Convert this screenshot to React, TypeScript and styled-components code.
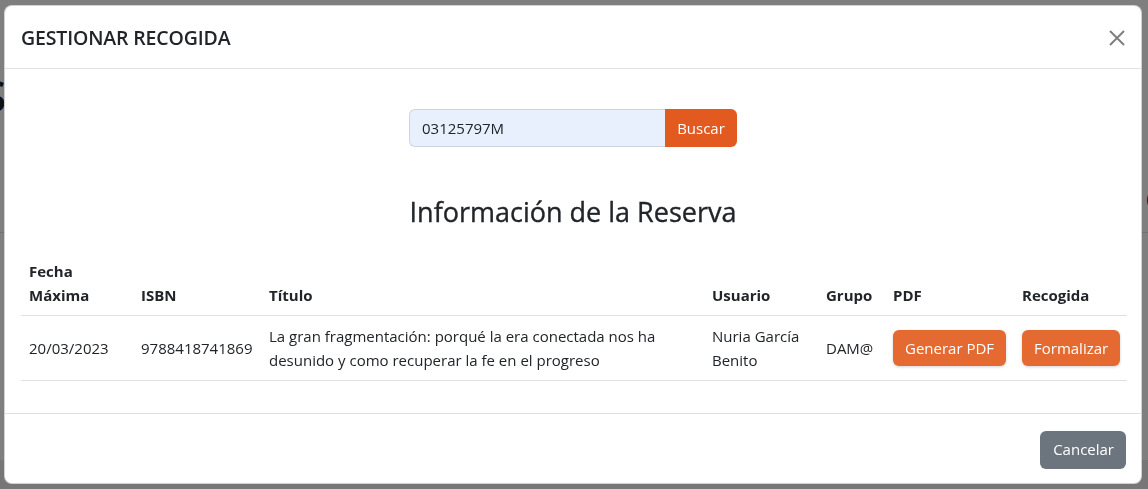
import React from "react";
import styled, { createGlobalStyle } from "styled-components";

const GlobalStyle = createGlobalStyle`
  * { box-sizing: border-box; }
  html, body { margin: 0; padding: 0; }
  body {
    font-family: "Open Sans", "Noto Sans", sans-serif;
    font-size: 16px;
    line-height: 1.5;
    color: #212529;
    background: #fff;
    overflow: hidden;
  }
`;

const Page = styled.div`
  width: 1148px;
  height: 489px;
  position: relative;
  overflow: hidden;
  background: #fff;
`;

const BehindHeading = styled.div`
  display: flex;
  justify-content: space-between;
  padding-top: 62px;
  font-family: "Open Sans", sans-serif;
  font-size: 44px;
  font-weight: 600;
  color: #212529;
  margin-left: -18px;
`;

const BehindRight = styled.div`
  margin-top: 108px;
  margin-right: -18px;
  font-size: 36px;
  font-weight: 600;
  color: #0d2a5c;
`;

const BehindRule = styled.div`
  position: absolute;
  left: 0;
  right: 0;
  top: 232px;
  border-top: 1px solid #dee2e6;
`;

const BehindFooter = styled.div`
  position: absolute;
  left: 0;
  right: 0;
  top: 460px;
  bottom: 0;
  background: #eeeeee;
`;

const Backdrop = styled.div`
  position: fixed;
  inset: 0;
  background: rgba(0, 0, 0, 0.5);
`;

const Dialog = styled.div`
  position: fixed;
  top: 5px;
  left: 4px;
  width: 1138px;
  height: 479px;
  display: flex;
  flex-direction: column;
  background: #fff;
  border: 1px solid rgba(0, 0, 0, 0.175);
  border-radius: 8px;
  overflow: hidden;
`;

const Header = styled.div`
  display: flex;
  align-items: center;
  justify-content: space-between;
  padding: 16px 16px 15px 16px;
  border-bottom: 1px solid #dee2e6;
  height: 63px;
`;

const Title = styled.h5`
  margin: 0;
  font-size: 19.5px;
  font-weight: 600;
  line-height: 1.5;
  letter-spacing: -0.15px;
`;

const CloseButton = styled.button`
  width: 16px;
  height: 16px;
  padding: 0;
  border: 0;
  background: transparent;
  opacity: 0.5;
  display: flex;
  align-items: center;
  justify-content: center;
  cursor: pointer;
`;

const Body = styled.div`
  padding: 16px;
  border-bottom: 1px solid #dee2e6;
  flex: none;
`;

const SearchRow = styled.form`
  display: flex;
  justify-content: center;
  margin-top: 24px;
`;

const SearchInput = styled.input`
  width: 256px;
  height: 38px;
  padding: 6px 12px;
  font-family: inherit;
  font-size: 15px;
  color: #212529;
  background: #e8f0fe;
  border: 1px solid #ced4da;
  border-right: 0;
  border-radius: 6px 0 0 6px;
  outline: none;
`;

const OrangeButton = styled.button<{ $tone?: "dark" | "light"; $shadow?: boolean }>`
  font-family: inherit;
  font-size: 15px;
  line-height: 1.5;
  color: #fff;
  background: ${(p) => (p.$tone === "light" ? "#e46a31" : "#e35a20")};
  border: 0;
  padding: 6px 12px;
  cursor: pointer;
  white-space: nowrap;
  ${(p) => p.$shadow && "box-shadow: 0 1px 3px rgba(0,0,0,0.18);"}
`;

const SearchButton = styled(OrangeButton)`
  width: 72px;
  height: 38px;
  border-radius: 0 6px 6px 0;
`;

const RowButton = styled(OrangeButton)`
  height: 36px;
  border-radius: 6px;
`;

const Heading = styled.h3`
  margin: 49px 0 23px;
  text-align: center;
  font-size: 27px;
  font-weight: 500;
  line-height: 1.2;
  -webkit-text-stroke: 0.35px #212529;
`;

const Table = styled.table`
  width: 1106px;
  border-collapse: collapse;
  table-layout: fixed;
  margin-bottom: 16px;
  font-size: 15px;
`;

const Th = styled.th`
  text-align: left;
  vertical-align: bottom;
  font-weight: 700;
  padding: 8px;
  line-height: 24px;
  border-bottom: 1px solid #dee2e6;
`;

const Td = styled.td`
  vertical-align: middle;
  padding: 8px;
  line-height: 24px;
  height: 65px;
  border-bottom: 1px solid #dee2e6;
  color: #212529;
`;

const Footer = styled.div`
  flex: 1;
  display: flex;
  justify-content: flex-end;
  align-items: center;
  padding: 12px 15px 12px 12px;
`;

const GrayButton = styled.button`
  font-family: inherit;
  font-size: 15px;
  line-height: 1.5;
  color: #fff;
  background: #6c757d;
  border: 0;
  border-radius: 6px;
  height: 38px;
  padding: 6px 12px 6px 13px;
  margin-top: 2px;
  cursor: pointer;
`;

const columns = [112, 128, 443, 114, 67, 129, 113];

export default function App() {
  return (
    <>
      <GlobalStyle />
      <Page>
        <BehindHeading>
          <span>S</span>
          <BehindRight>e</BehindRight>
        </BehindHeading>
        <BehindRule />
        <BehindFooter />
        <Backdrop />
        <Dialog role="dialog">
          <Header>
            <Title>GESTIONAR RECOGIDA</Title>
            <CloseButton aria-label="Close">
              <svg width="16" height="16" viewBox="0 0 16 16">
                <path d="M1 1 L15 15 M15 1 L1 15" stroke="#000" strokeWidth="2" fill="none" />
              </svg>
            </CloseButton>
          </Header>
          <Body>
            <SearchRow onSubmit={(e) => e.preventDefault()}>
              <SearchInput defaultValue="03125797M" />
              <SearchButton type="submit">Buscar</SearchButton>
            </SearchRow>
            <Heading>Información de la Reserva</Heading>
            <Table>
              <colgroup>
                {columns.map((w, i) => (
                  <col key={i} style={{ width: w }} />
                ))}
              </colgroup>
              <thead>
                <tr>
                  <Th>Fecha Máxima</Th>
                  <Th>ISBN</Th>
                  <Th>Título</Th>
                  <Th>Usuario</Th>
                  <Th>Grupo</Th>
                  <Th>PDF</Th>
                  <Th>Recogida</Th>
                </tr>
              </thead>
              <tbody>
                <tr>
                  <Td>20/03/2023</Td>
                  <Td>9788418741869</Td>
                  <Td>
                    La gran fragmentación: porqué la era conectada nos ha desunido y como recuperar la fe en el progreso
                  </Td>
                  <Td>Nuria García Benito</Td>
                  <Td>DAM@</Td>
                  <Td>
                    <RowButton $tone="light" $shadow>Generar PDF</RowButton>
                  </Td>
                  <Td>
                    <RowButton $tone="light" $shadow>Formalizar</RowButton>
                  </Td>
                </tr>
              </tbody>
            </Table>
          </Body>
          <Footer>
            <GrayButton>Cancelar</GrayButton>
          </Footer>
        </Dialog>
      </Page>
    </>
  );
}
